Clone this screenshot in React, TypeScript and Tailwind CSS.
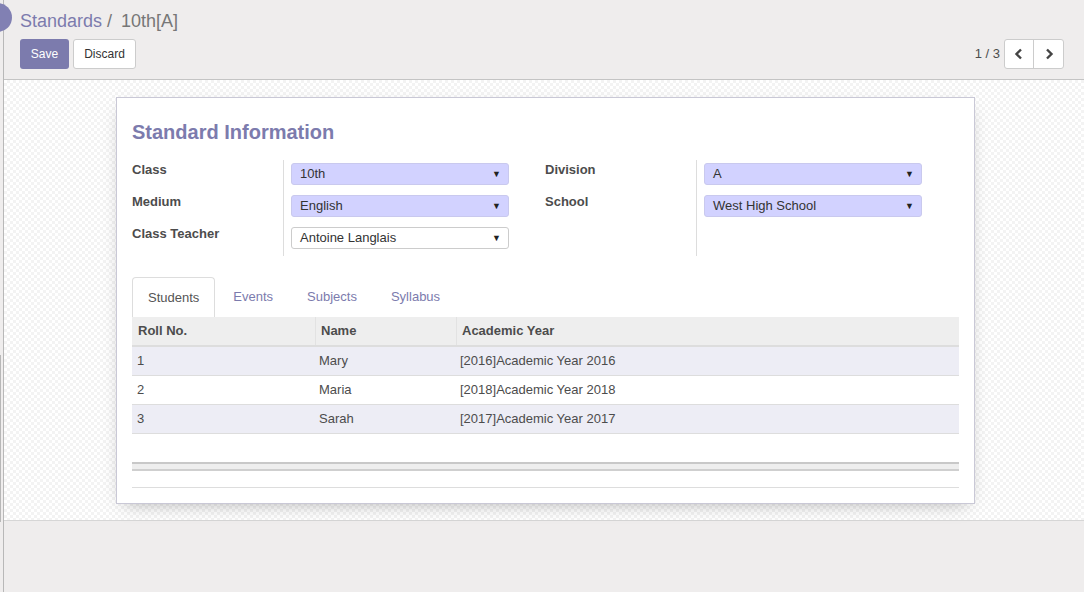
import React from "react";

const font = { fontFamily: '"Liberation Sans", Arial, sans-serif' };

function Select({ value, highlight }: { value: string; highlight?: boolean }) {
  return (
    <div
      className={`relative flex h-[22px] w-[218px] items-center rounded-[3px] border pl-[8px] text-[13px] text-[#333] ${
        highlight ? "border-[#c9c9ee] bg-[#d2d2ff]" : "border-[#cccccc] bg-white"
      }`}
    >
      <span>{value}</span>
      <span className="absolute right-[7px] top-[3px] text-[9px] leading-[14px] text-[#222]">▼</span>
    </div>
  );
}

function Row({ label, children }: { label: string; children?: React.ReactNode }) {
  return (
    <div className="flex h-[32px]">
      <div className="w-[151px] shrink-0 pt-[1px] text-[13px] font-bold leading-[18px] text-[#4c4c4c]">{label}</div>
      <div className="border-l border-[#dddddd] pl-[7px] pt-[3px]">{children}</div>
    </div>
  );
}

export default function App() {
  const rows = [
    { n: "1", name: "Mary", y: "[2016]Academic Year 2016" },
    { n: "2", name: "Maria", y: "[2018]Academic Year 2018" },
    { n: "3", name: "Sarah", y: "[2017]Academic Year 2017" },
  ];
  return (
    <div className="relative flex h-[592px] w-[1084px] overflow-hidden bg-[#efeded]" style={font}>
      <div className="absolute left-[-17px] top-[3px] h-[29px] w-[29px] rounded-full bg-[#8180b3]" />
      {/* left strip */}
      <div className="flex w-[4px] shrink-0 flex-col border-r border-[#b8b8b8]">
        <div className="h-[355px]" />
        <div className="h-[167px] border-l border-[#b8b8b8]" />
      </div>
      <div className="flex flex-1 flex-col">
        {/* control panel */}
        <div className="h-[80px] border-b border-[#c4c4c4] pl-[16px] pr-[20px]">
          <div className="flex h-[39px] items-center pt-[3px] text-[18px] text-[#777]">
            <span className="text-[#7c7bad]">Standards</span>
            <span className="ml-[5px]">/</span>
            <span className="ml-[9px]">10th[A]</span>
          </div>
          <div className="flex items-center justify-between">
            <div className="flex gap-[4px]">
              <div className="flex h-[30px] w-[49px] items-center justify-center rounded-[3px] bg-[#7c7bad] text-[12px] text-white">
                Save
              </div>
              <div className="flex h-[30px] w-[63px] items-center justify-center rounded-[3px] border border-[#cccccc] bg-white text-[12px] text-[#333]">
                Discard
              </div>
            </div>
            <div className="flex items-center">
              <span className="mr-[4px] text-[13px] text-[#4c4c4c]">1 / 3</span>
              <div className="flex h-[30px] rounded-[3px] border border-[#cccccc] bg-white">
                <div className="flex w-[29px] items-center justify-center border-r border-[#cccccc]">
                  <svg width="10" height="12" viewBox="0 0 10 12">
                    <path d="M7 1.5 L2.5 6 L7 10.5" fill="none" stroke="#444" strokeWidth="2.4" />
                  </svg>
                </div>
                <div className="flex w-[29px] items-center justify-center">
                  <svg width="10" height="12" viewBox="0 0 10 12">
                    <path d="M3 1.5 L7.5 6 L3 10.5" fill="none" stroke="#444" strokeWidth="2.4" />
                  </svg>
                </div>
              </div>
            </div>
          </div>
        </div>
        {/* sheet background */}
        <div className="h-[441px] border-b border-[#d6d6d6] bg-white bg-[repeating-conic-gradient(#f3f3f3_0%_25%,#ffffff_0%_50%)] bg-[length:6px_6px] pt-[17px]">
          <div className="ml-[112px] h-[407px] w-[859px] border border-[#c9c8d6] bg-white pl-[15px] pr-[15px] shadow-[0_6px_18px_-8px_rgba(0,0,0,0.35)]">
            <div className="pt-[21px] text-[20px] font-bold leading-[26px] text-[#7c7bad]">Standard Information</div>
            <div className="mt-[15px] flex">
              <div className="w-[413px]">
                <Row label="Class">
                  <Select value="10th" highlight />
                </Row>
                <Row label="Medium">
                  <Select value="English" highlight />
                </Row>
                <Row label="Class Teacher">
                  <Select value="Antoine Langlais" />
                </Row>
              </div>
              <div className="w-[413px]">
                <Row label="Division">
                  <Select value="A" highlight />
                </Row>
                <Row label="School">
                  <Select value="West High School" highlight />
                </Row>
                <Row label="" />
              </div>
            </div>
            {/* tabs */}
            <div className="mt-[21px] flex h-[40px] text-[13px]">
              <div className="mr-[2px] flex items-center rounded-t-[4px] border border-b-0 border-[#dddddd] px-[15px] text-[#555]">
                Students
              </div>
              <div className="mr-[2px] flex items-center px-[16px] text-[#7c7bad]">Events</div>
              <div className="mr-[2px] flex items-center px-[16px] text-[#7c7bad]">Subjects</div>
              <div className="mr-[2px] flex items-center px-[16px] text-[#7c7bad]">Syllabus</div>
            </div>
            {/* table */}
            <div className="text-[13px] text-[#4c4c4c]">
              <div className="flex h-[30px] border-b-2 border-[#dddddd] bg-[#eeeeee] font-bold">
                <div className="flex w-[183px] items-center pl-[6px]">Roll No.</div>
                <div className="flex w-[141px] items-center border-l border-[#e2e2e2] pl-[5px]">Name</div>
                <div className="flex flex-1 items-center border-l border-[#e2e2e2] pl-[5px]">Academic Year</div>
              </div>
              {rows.map((r, i) => (
                <div
                  key={r.n}
                  className={`flex h-[29px] border-b border-[#dddddd] ${i % 2 === 0 ? "bg-[#ededf5]" : "bg-white"}`}
                >
                  <div className="flex w-[183px] items-center pl-[5px]">{r.n}</div>
                  <div className="flex w-[141px] items-center pl-[4px]">{r.name}</div>
                  <div className="flex flex-1 items-center pl-[4px]">{r.y}</div>
                </div>
              ))}
              <div className="h-[28px]" />
              <div className="h-[9px] border-y-2 border-t-[#c8c8c8] border-b-[#cfcfcf] bg-[#eeeeee]" />
              <div className="h-[16px]" />
              <div className="h-[1px] bg-[#dddddd]" />
            </div>
          </div>
        </div>
        <div className="flex-1" />
      </div>
    </div>
  );
}
